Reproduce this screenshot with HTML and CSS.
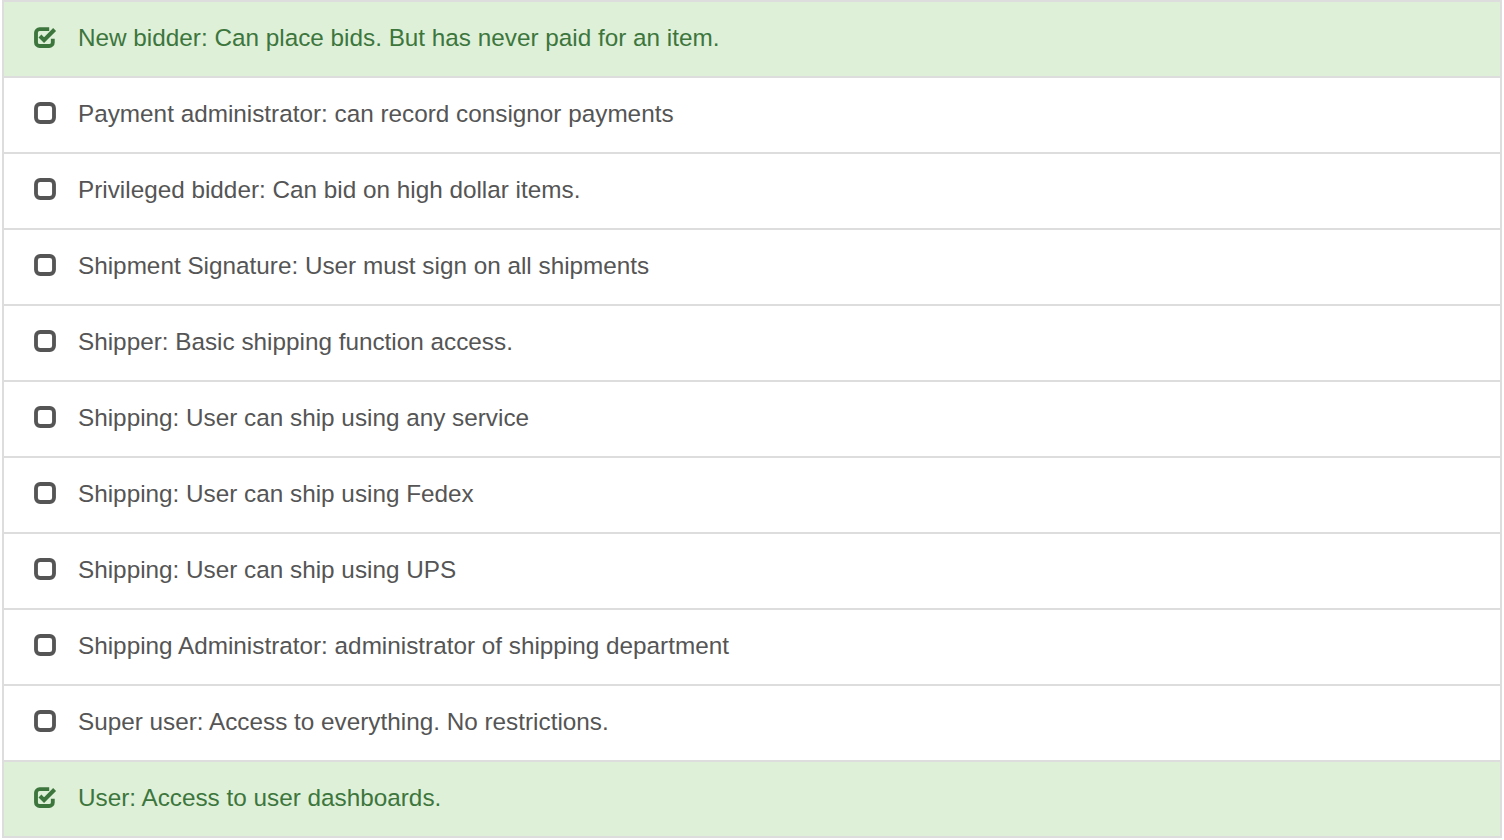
FILE: index.html
```html
<!DOCTYPE html>
<html>
<head>
<meta charset="utf-8">
<link rel="stylesheet" href="styles.css">
</head>
<body>
<ul class="list">
  <li class="item checked"><svg class="ico" viewBox="0 0 20 20"><path d="M16.5 11.5v3a3 3 0 0 1-3 3h-8a3 3 0 0 1-3-3v-8a3 3 0 0 1 3-3h8" fill="none" stroke="currentColor" stroke-width="3.2"/><path d="M5.8 9.2l3.4 3.4L18 3.8" fill="none" stroke="currentColor" stroke-width="3.4"/></svg><span>New bidder: Can place bids. But has never paid for an item.</span></li>
  <li class="item"><svg class="ico" viewBox="0 0 20 20"><rect x="2.5" y="2.5" width="15" height="15" rx="3.5" fill="none" stroke="currentColor" stroke-width="3.2"/></svg><span>Payment administrator: can record consignor payments</span></li>
  <li class="item"><svg class="ico" viewBox="0 0 20 20"><rect x="2.5" y="2.5" width="15" height="15" rx="3.5" fill="none" stroke="currentColor" stroke-width="3.2"/></svg><span>Privileged bidder: Can bid on high dollar items.</span></li>
  <li class="item"><svg class="ico" viewBox="0 0 20 20"><rect x="2.5" y="2.5" width="15" height="15" rx="3.5" fill="none" stroke="currentColor" stroke-width="3.2"/></svg><span>Shipment Signature: User must sign on all shipments</span></li>
  <li class="item"><svg class="ico" viewBox="0 0 20 20"><rect x="2.5" y="2.5" width="15" height="15" rx="3.5" fill="none" stroke="currentColor" stroke-width="3.2"/></svg><span>Shipper: Basic shipping function access.</span></li>
  <li class="item"><svg class="ico" viewBox="0 0 20 20"><rect x="2.5" y="2.5" width="15" height="15" rx="3.5" fill="none" stroke="currentColor" stroke-width="3.2"/></svg><span>Shipping: User can ship using any service</span></li>
  <li class="item"><svg class="ico" viewBox="0 0 20 20"><rect x="2.5" y="2.5" width="15" height="15" rx="3.5" fill="none" stroke="currentColor" stroke-width="3.2"/></svg><span>Shipping: User can ship using Fedex</span></li>
  <li class="item"><svg class="ico" viewBox="0 0 20 20"><rect x="2.5" y="2.5" width="15" height="15" rx="3.5" fill="none" stroke="currentColor" stroke-width="3.2"/></svg><span>Shipping: User can ship using UPS</span></li>
  <li class="item"><svg class="ico" viewBox="0 0 20 20"><rect x="2.5" y="2.5" width="15" height="15" rx="3.5" fill="none" stroke="currentColor" stroke-width="3.2"/></svg><span>Shipping Administrator: administrator of shipping department</span></li>
  <li class="item"><svg class="ico" viewBox="0 0 20 20"><rect x="2.5" y="2.5" width="15" height="15" rx="3.5" fill="none" stroke="currentColor" stroke-width="3.2"/></svg><span>Super user: Access to everything. No restrictions.</span></li>
  <li class="item checked"><svg class="ico" viewBox="0 0 20 20"><path d="M16.5 11.5v3a3 3 0 0 1-3 3h-8a3 3 0 0 1-3-3v-8a3 3 0 0 1 3-3h8" fill="none" stroke="currentColor" stroke-width="3.2"/><path d="M5.8 9.2l3.4 3.4L18 3.8" fill="none" stroke="currentColor" stroke-width="3.4"/></svg><span>User: Access to user dashboards.</span></li>
</ul>
</body>
</html>
```
FILE: styles.css
```css
html, body {
  margin: 0;
  padding: 0;
  background: #fff;
}
body {
  font-family: "Liberation Sans", Arial, sans-serif;
}
.list {
  list-style: none;
  margin: 0 0 0 2px;
  padding: 0;
  width: 1500px;
  box-sizing: border-box;
  border: 2px solid #dddddd;
  border-bottom: none;
}
.item {
  height: 74px;
  box-sizing: content-box;
  border-bottom: 2px solid #dddddd;
  display: flex;
  align-items: center;
  padding-left: 30px;
  color: #555555;
  font-size: 24.3px;
  background: #fff;
}
.item span {
  margin-top: -2px;
}
.item.checked {
  background: #dff0d8;
  color: #3c763d;
}
.ico {
  width: 24px;
  height: 24px;
  flex: none;
  margin-right: 21px;
  margin-top: -4px;
  margin-left: -1px;
}
```
